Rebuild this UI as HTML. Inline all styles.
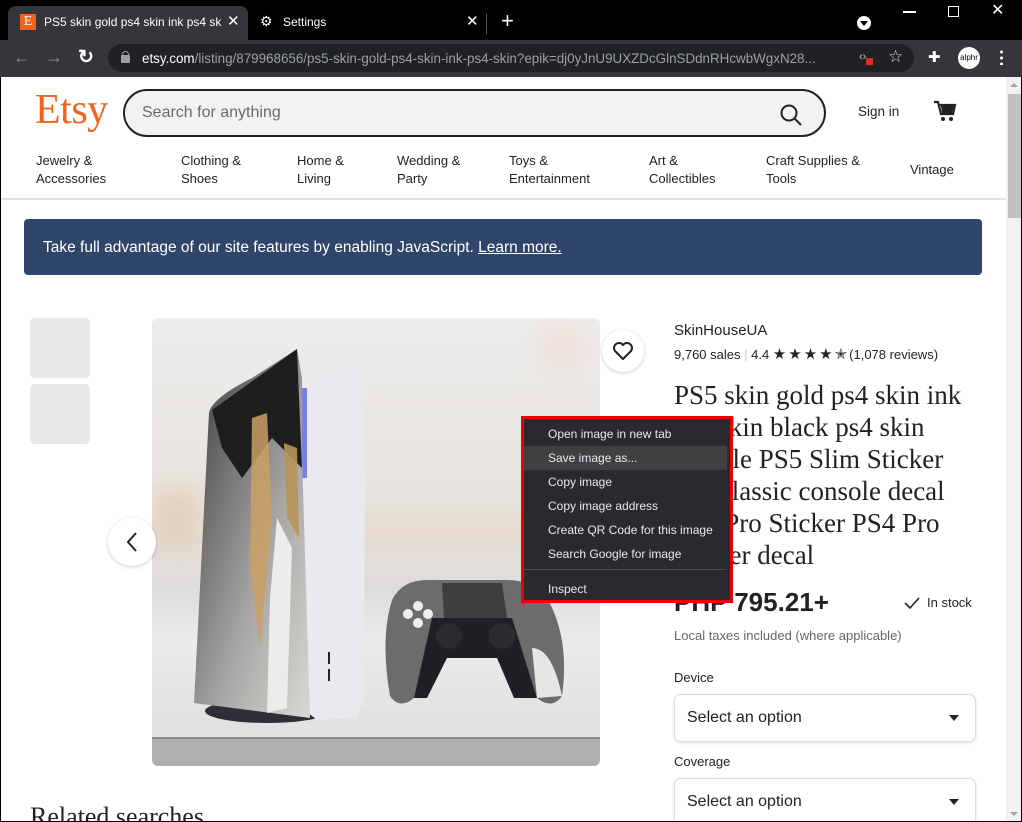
<!DOCTYPE html>
<html><head><meta charset="utf-8"><style>
*{margin:0;padding:0;box-sizing:border-box}
body{width:1022px;height:822px;overflow:hidden;background:#000;font-family:"Liberation Sans",sans-serif;position:relative}
.a{position:absolute}
.page{left:1px;top:77px;width:1005px;height:744px;background:#fff;overflow:hidden}
.nav{font-size:13px;color:#222;line-height:18px}
.mi{position:absolute;left:24px;font-size:12px;color:#e8eaed}
</style></head><body>
<!-- tab bar -->
<div class="a" style="left:8px;top:6px;width:240px;height:34px;background:#35363a;border-radius:8px 8px 0 0"></div>
<div class="a" style="left:20px;top:14px;width:16px;height:16px;background:#f1641e;color:#fff;font-family:'Liberation Serif',serif;font-size:14px;text-align:center;line-height:16px">E</div>
<div class="a" style="left:44px;top:15px;font-size:12px;color:#fff;width:178px;overflow:hidden;white-space:nowrap">PS5 skin gold ps4 skin ink ps4 ski</div>
<div class="a" style="left:227px;top:12px;font-size:15px;color:#fff">✕</div>
<div class="a" style="left:260px;top:13px;font-size:14px;color:#fff">⚙</div>
<div class="a" style="left:283px;top:15px;font-size:12px;color:#fff">Settings</div>
<div class="a" style="left:466px;top:12px;font-size:15px;color:#fff">✕</div>
<div class="a" style="left:486px;top:14px;width:1px;height:20px;background:#555"></div>
<div class="a" style="left:501px;top:8px;font-size:22px;color:#fff">+</div>
<div class="a" style="left:857px;top:16px;width:14px;height:14px;border-radius:50%;background:#fff"></div>
<div class="a" style="left:860px;top:21px;width:0;height:0;border-left:4px solid transparent;border-right:4px solid transparent;border-top:5px solid #000"></div>
<div class="a" style="left:903px;top:11px;width:13px;height:1.5px;background:#fff"></div>
<div class="a" style="left:948px;top:6px;width:11px;height:11px;border:1.3px solid #fff"></div>
<div class="a" style="left:991px;top:0px;font-size:16px;color:#fff">✕</div>
<!-- toolbar -->
<div class="a" style="left:0;top:40px;width:1022px;height:37px;background:#35363a"></div>
<div class="a" style="left:13px;top:47px;font-size:18px;color:#8a8b8d">←</div>
<div class="a" style="left:45px;top:47px;font-size:18px;color:#8a8b8d">→</div>
<div class="a" style="left:78px;top:46px;font-size:19px;color:#fff;font-weight:bold">↻</div>
<div class="a" style="left:108px;top:44px;width:806px;height:28px;background:#202124;border-radius:14px"></div>
<div class="a" style="left:121px;top:55px;width:9px;height:8px;background:#9aa0a6;border-radius:1px"></div>
<div class="a" style="left:122px;top:51px;width:7px;height:6px;border:1.5px solid #9aa0a6;border-bottom:none;border-radius:4px 4px 0 0"></div>
<div class="a" style="left:142px;top:51px;font-size:13.4px;color:#9aa0a6;white-space:nowrap"><span style="color:#fff">etsy.com</span>/listing/879968656/ps5-skin-gold-ps4-skin-ink-ps4-skin?epik=dj0yJnU9UXZDcGlnSDdnRHcwbWgxN28...</div>
<div class="a" style="left:859px;top:51px;font-size:11px;color:#ccc">‹›</div>
<div class="a" style="left:866px;top:58px;width:7px;height:7px;background:#d93025"></div>
<div class="a" style="left:888px;top:47px;font-size:17px;color:#ddd">☆</div>
<div class="a" style="left:928px;top:48px;font-size:15px;color:#fff">✚</div>
<div class="a" style="left:958px;top:47px;width:22px;height:22px;border-radius:50%;background:#fff;color:#000;font-size:8px;text-align:center;line-height:22px">alphr</div>
<div class="a" style="left:1000px;top:49px;width:3px;height:16px;background:radial-gradient(circle,#fff 1.4px,transparent 1.6px) 0 0/3px 6px"></div>
<!-- page -->
<div class="a page">
  <div class="a" style="left:34px;top:9px;font-family:'Liberation Serif',serif;font-size:42px;color:#f1641e;letter-spacing:-0.5px">Etsy</div>
  <div class="a" style="left:122px;top:12px;width:703px;height:48px;border:2px solid #222;border-radius:24px;background:#f2f2f2"></div>
  <div class="a" style="left:141px;top:27px;font-size:16px;color:#6b6b6b">Search for anything</div>
  <svg class="a" style="left:778px;top:26px" width="24" height="24"><circle cx="10" cy="10" r="7.5" fill="none" stroke="#222" stroke-width="2"/><line x1="15.5" y1="15.5" x2="22" y2="22" stroke="#222" stroke-width="2"/></svg>
  <div class="a" style="left:857px;top:27px;font-size:13.5px;color:#222">Sign in</div>
  <svg class="a" style="left:932px;top:22px" width="24" height="24"><path d="M1 3h4l3 12h12l2-9H7" fill="none" stroke="#222" stroke-width="2.2"/><path d="M8 7h13l-2 7H9z" fill="#222"/><circle cx="10" cy="20" r="2" fill="#222"/><circle cx="18" cy="20" r="2" fill="#222"/></svg>
  <div class="a nav" style="left:35px;top:75px">Jewelry &amp;<br>Accessories</div>
  <div class="a nav" style="left:180px;top:75px">Clothing &amp;<br>Shoes</div>
  <div class="a nav" style="left:296px;top:75px">Home &amp;<br>Living</div>
  <div class="a nav" style="left:396px;top:75px">Wedding &amp;<br>Party</div>
  <div class="a nav" style="left:508px;top:75px">Toys &amp;<br>Entertainment</div>
  <div class="a nav" style="left:648px;top:75px">Art &amp;<br>Collectibles</div>
  <div class="a nav" style="left:765px;top:75px">Craft Supplies &amp;<br>Tools</div>
  <div class="a nav" style="left:909px;top:84px">Vintage</div>
  <div class="a" style="left:0;top:121px;width:1005px;height:2px;background:#e1e1e1"></div>
  <div class="a" style="left:23px;top:142px;width:958px;height:56px;background:#2f466a;border-radius:4px"></div>
  <div class="a" style="left:42px;top:162px;font-size:15.5px;color:#fff">Take full advantage of our site features by enabling JavaScript. <u>Learn more.</u></div>
  <div class="a" style="left:29px;top:241px;width:60px;height:60px;background:#e9e9e9;border-radius:5px"></div>
  <div class="a" style="left:29px;top:307px;width:60px;height:60px;background:#e9e9e9;border-radius:5px"></div>
  <!-- product image -->
  <svg class="a" style="left:151px;top:241px;border-radius:6px" width="448" height="448">
    <defs>
      <linearGradient id="bg" x1="0" y1="0" x2="0" y2="1"><stop offset="0" stop-color="#eeedec"/><stop offset=".45" stop-color="#e6e2dd"/><stop offset=".6" stop-color="#dedcda"/><stop offset=".72" stop-color="#ebebeb"/><stop offset="1" stop-color="#dcdcdc"/></linearGradient>
      <linearGradient id="pn" x1="0" y1="0" x2="1" y2="1"><stop offset="0" stop-color="#3a3a3c"/><stop offset=".35" stop-color="#7d7b7a"/><stop offset=".6" stop-color="#a9a8a6"/><stop offset="1" stop-color="#d9d8d5"/></linearGradient>
      <filter id="bl"><feGaussianBlur stdDeviation="12"/></filter>
    </defs>
    <rect width="448" height="448" fill="url(#bg)"/>
    <g filter="url(#bl)" opacity=".6"><rect x="0" y="170" width="50" height="60" fill="#e3c8a8"/><rect x="190" y="200" width="258" height="30" fill="#e8d5c0"/><circle cx="410" cy="30" r="20" fill="#f0d8c8"/></g>
    <rect x="0" y="420" width="448" height="28" fill="#b0afad"/>
    <rect x="0" y="419" width="448" height="2" fill="#8a8a8a"/>
    <ellipse cx="115" cy="393" rx="62" ry="12" fill="#2d2e36"/>
    <path d="M150 62 Q190 50 212 46 L213 160 L212 380 L205 400 L165 402 L150 390 Z" fill="#e9e9ee"/>
    <rect x="150" y="70" width="5" height="90" fill="#4a52d8" opacity=".7"/>
    <path d="M57 95 Q60 80 100 60 L145 31 L150 60 L150 140 L158 400 L42 385 Z" fill="url(#pn)"/>
    <path d="M60 92 L145 31 L150 150 L120 120 L90 160 L70 130 Z" fill="#1e1e20"/>
    <path d="M100 100 L115 95 L120 200 L108 330 L98 250 Z" fill="#c9a064" opacity=".85"/>
    <path d="M132 125 L145 130 L147 220 L135 200 Z" fill="#b9935a" opacity=".9"/>
    <path d="M125 200 L140 230 L135 390 L115 395 L118 280 Z" fill="#eeecea"/>
    <rect x="176" y="334" width="2" height="12" fill="#222"/><rect x="176" y="351" width="2" height="12" fill="#222"/>
    <path d="M240 282 Q250 262 275 262 L355 262 Q380 262 395 280 Q418 320 410 378 Q400 392 385 380 L360 335 L290 335 L262 380 Q248 392 238 378 Q228 320 240 282Z" fill="#6d6c6b"/>
    <path d="M290 265 L350 265 L355 300 L292 300 Z" fill="#3e3d3c"/>
    <path d="M280 300 L360 300 L385 380 L362 380 L345 340 L295 340 L275 380 L262 380 Z" fill="#1f2025"/>
    <circle cx="297" cy="318" r="13" fill="#2a2b30"/><circle cx="350" cy="318" r="13" fill="#2a2b30"/>
    <path d="M380 330 Q400 330 410 378 L385 380 Z" fill="#e6e6e4"/>
    <circle cx="266" cy="288" r="5" fill="#eee"/><circle cx="276" cy="296" r="5" fill="#eee"/><circle cx="256" cy="296" r="5" fill="#eee"/><circle cx="266" cy="305" r="5" fill="#eee"/>
  </svg>
  <div class="a" style="left:107px;top:441px;width:48px;height:48px;border-radius:50%;background:#fff;box-shadow:0 1px 4px rgba(0,0,0,.2)"></div>
  <svg class="a" style="left:122px;top:453px" width="20" height="24"><path d="M13 3 L5 12 L13 21" fill="none" stroke="#222" stroke-width="2"/></svg>
  <div class="a" style="left:601px;top:253px;width:42px;height:42px;border-radius:50%;background:#fff;box-shadow:0 1px 4px rgba(0,0,0,.2)"></div>
  <svg class="a" style="left:611px;top:263px" width="22" height="22"><path d="M11 19 L3 11 A4.6 4.6 0 0 1 11 5 A4.6 4.6 0 0 1 19 11 Z" fill="none" stroke="#222" stroke-width="2" stroke-linejoin="round"/></svg>
  <!-- right column -->
  <div class="a" style="left:673px;top:245px;font-size:15px;color:#222">SkinHouseUA</div>
  <div class="a" style="left:673px;top:268px;font-size:13px;color:#222;white-space:nowrap">9,760 sales <span style="color:#ccc">|</span> 4.4 <span style="font-size:15px;letter-spacing:2px">★★★★✭</span>(1,078 reviews)</div>
  <div class="a" style="left:673px;top:302px;width:330px;font-family:'Liberation Serif',serif;font-size:27px;line-height:32px;color:#222;white-space:nowrap">PS5 skin gold ps4 skin ink<br>ps4 skin black ps4 skin<br>Marble PS5 Slim Sticker<br>Ps4 classic console decal<br>PS5 Pro Sticker PS4 Pro<br>Sticker decal</div>
  <div class="a" style="left:673px;top:510px;font-size:26px;font-weight:bold;color:#222">PHP 795.21+</div>
  <svg class="a" style="left:903px;top:519px" width="16" height="14"><path d="M1 7 L6 12 L15 2" fill="none" stroke="#222" stroke-width="1.6"/></svg>
  <div class="a" style="left:926px;top:518px;font-size:13px;color:#222">In stock</div>
  <div class="a" style="left:673px;top:551px;font-size:13px;color:#666">Local taxes included (where applicable)</div>
  <div class="a" style="left:673px;top:593px;font-size:13px;color:#222">Device</div>
  <div class="a" style="left:673px;top:617px;width:302px;height:48px;border:1px solid #ddd;border-radius:7px;box-shadow:0 1px 3px rgba(0,0,0,.12)"></div>
  <div class="a" style="left:686px;top:632px;font-size:16px;color:#222">Select an option</div>
  <div class="a" style="left:948px;top:638px;border-left:5px solid transparent;border-right:5px solid transparent;border-top:6px solid #222"></div>
  <div class="a" style="left:673px;top:677px;font-size:13px;color:#222">Coverage</div>
  <div class="a" style="left:673px;top:701px;width:302px;height:48px;border:1px solid #ddd;border-radius:7px;box-shadow:0 1px 3px rgba(0,0,0,.12)"></div>
  <div class="a" style="left:686px;top:716px;font-size:16px;color:#222">Select an option</div>
  <div class="a" style="left:948px;top:722px;border-left:5px solid transparent;border-right:5px solid transparent;border-top:6px solid #222"></div>
  <div class="a" style="left:29px;top:725px;font-family:'Liberation Serif',serif;font-size:26px;color:#222">Related searches</div>
  <!-- context menu -->
  <div class="a" style="left:520px;top:339px;width:212px;height:187px;border:3px solid #e00;background:#292a2d">
    <div class="a" style="left:0;top:27px;width:203px;height:24px;background:#3f4042"></div>
    <div class="mi" style="top:8px">Open image in new tab</div>
    <div class="mi" style="top:32px">Save image as...</div>
    <div class="mi" style="top:56px">Copy image</div>
    <div class="mi" style="top:80px">Copy image address</div>
    <div class="mi" style="top:104px">Create QR Code for this image</div>
    <div class="mi" style="top:128px">Search Google for image</div>
    <div class="a" style="left:0;top:150px;width:203px;height:1px;background:#4a4b4e"></div>
    <div class="mi" style="top:163px">Inspect</div>
  </div>
</div>
<!-- scrollbar -->
<div class="a" style="left:1006px;top:77px;width:15px;height:744px;background:#f1f1f1"></div>
<div class="a" style="left:1010px;top:83px;border-left:4px solid transparent;border-right:4px solid transparent;border-bottom:4px solid #a3a3a3"></div>
<div class="a" style="left:1008px;top:94px;width:13px;height:124px;background:#c1c1c1"></div>
<div class="a" style="left:1010px;top:812px;border-left:4px solid transparent;border-right:4px solid transparent;border-top:4px solid #a3a3a3"></div>
</body></html>
